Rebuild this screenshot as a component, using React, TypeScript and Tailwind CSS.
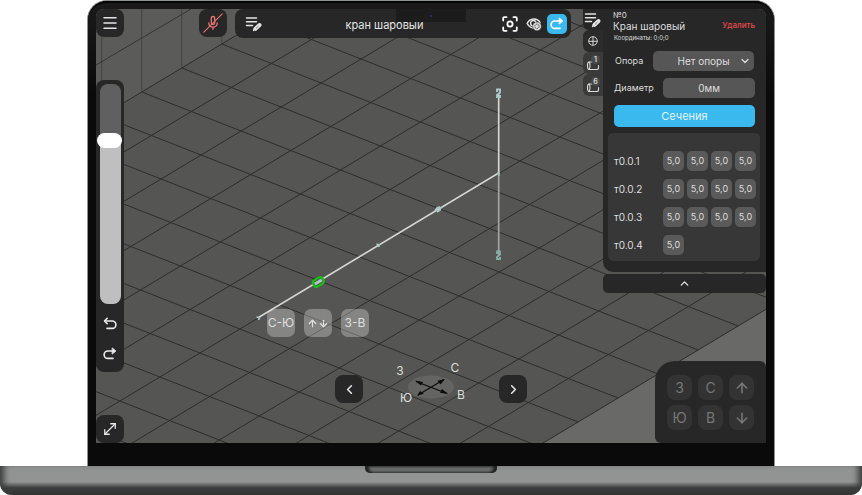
import { useState } from "react";
import type { ReactNode } from "react";
import { ArrowDown, ArrowUp, ChevronDown, ChevronLeft, ChevronRight, ChevronUp, Menu, MoveDiagonal } from "lucide-react";

/* Isometric floor: origin and the two step vectors of one tile */
const ORIGIN = [45.7, 83];
const U = [40, -24];
const V = [49.7, 19.5];
const TILES = 12;

function node(i: number, j: number) {
  return [ORIGIN[0] + i * U[0] + j * V[0], ORIGIN[1] + i * U[1] + j * V[1]];
}

function segment(a: number[], b: number[]) {
  return `M${a[0].toFixed(1)} ${a[1].toFixed(1)}L${b[0].toFixed(1)} ${b[1].toFixed(1)}`;
}

const rising = Array.from({ length: TILES + 1 }, (_, j) => segment(node(-24, j), node(24, j))).join("");
const falling = Array.from({ length: 30 }, (_, k) => segment(node(k - 18, 0), node(k - 18, TILES))).join("");
const floor = [node(-24, 0), node(24, 0), node(24, TILES), node(-24, TILES)].map((p) => p.join(",")).join(" ");
const wall = [-1, 0, 1, 2, 3].map((i) => segment(node(i, 0), [node(i, 0)[0], 0])).join("");

function Scene() {
  return (
    <svg className="absolute inset-0 h-full w-full" viewBox="0 0 670 434" preserveAspectRatio="xMidYMid slice" aria-hidden="true">
      <rect width="670" height="434" fill="#5b5b59" />
      <path d={`M${node(-24, 12).join(" ")}L${node(24, 12).join(" ")}V900H-900Z`} fill="#696967" />
      <polygon points={floor} fill="#555553" />
      <path d={rising + falling} stroke="#2d2d2c" strokeWidth="1" fill="none" />
      <path d={wall} stroke="#444443" strokeWidth="1" fill="none" />
      <path d="M0 56L95 0" stroke="#353534" strokeWidth="1" />
      <path d="M402.700 164V246" stroke="#a3a5a4" strokeWidth="1.700" />
      <path d="M162.500 308.500L402.700 164V84" stroke="#d4d5d4" strokeWidth="1.700" fill="none" />
      <g stroke="#a9c9c8" strokeWidth="1.900" fill="none">
        <path d="M401 83v-2.500h3v3l-3 2.500v2h3v-2" />
        <path d="M401 245v-2.500h3v3l-3 2.500v2h3v-2" stroke="#86aaa6" />
        <path d="M401 165l2-2v4" strokeWidth="1.200" />
        <path d="M339 202l2-3 3-1 M341 203l3-2 1-3" />
        <path d="M280.500 235l3 1-1 2" strokeWidth="1.500" />
        <path d="M160.500 308l3 1-1 2" strokeWidth="1.500" />
      </g>
      <g transform="translate(222.300 273) rotate(-30)">
        <rect x="-5.500" y="-3.500" width="11" height="7" rx="3" fill="#4b634d" stroke="#10c510" strokeWidth="2" />
        <path d="M-4 0H4" stroke="#b9bfc9" strokeWidth="3" />
      </g>
    </svg>
  );
}

function UndoIcon({ flip = false, className = "h-4 w-4" }: { flip?: boolean; className?: string }) {
  return (
    <svg viewBox="0 0 16 16" className={className} fill="none" stroke="currentColor" strokeWidth="1.600" strokeLinecap="round" strokeLinejoin="round" aria-hidden="true">
      {flip ? (
        <>
          <path d="M12 5H5.800a3.700 3.700 0 0 0 0 7.400H11" />
          <path d="M10.500 2.200L13.800 5L10.500 7.800Z" fill="currentColor" strokeWidth="1" />
        </>
      ) : (
        <>
          <path d="M3 5H10.200a3.700 3.700 0 0 1 0 7.400H5" />
          <path d="M5.200 2.300L2.500 5L5.200 7.700" />
        </>
      )}
    </svg>
  );
}

function ListEditIcon() {
  return (
    <svg viewBox="0 0 18 16" className="h-4 w-[18px]" fill="none" stroke="currentColor" strokeLinecap="round" aria-hidden="true">
      <path d="M1.500 2H11.500M1.500 5.700H11.500M1.500 9.500H7.500" strokeWidth="1.500" />
      <path d="M10.500 12.800L14.500 9" strokeWidth="4" />
      <path d="M8.500 14.500l1-2" strokeWidth="1.400" />
      <path d="M11.200 12.200l2-1.900" stroke="#555" strokeWidth="0.700" />
    </svg>
  );
}

function MicOffIcon() {
  return (
    <svg viewBox="0 0 20 20" className="h-5 w-5" fill="none" stroke="#e27172" strokeWidth="1.400" strokeLinecap="round" aria-hidden="true">
      <rect x="8.300" y="3.500" width="3.400" height="8" rx="1.700" />
      <path d="M5.800 10a4.200 4.200 0 0 0 8.400 0M10 14.300v2" />
      <path d="M.8 19.200L19.200.8" strokeWidth="1.200" />
    </svg>
  );
}

function FocusIcon() {
  return (
    <svg viewBox="0 0 16 16" className="h-4 w-4" fill="none" stroke="currentColor" strokeWidth="1.800" strokeLinecap="round" strokeLinejoin="round" aria-hidden="true">
      <path d="M1.200 4.500V2.200a1 1 0 0 1 1-1H4.500M11.500 1.200h2.300a1 1 0 0 1 1 1V4.500M14.800 11.500v2.300a1 1 0 0 1-1 1H11.500M4.500 14.800H2.200a1 1 0 0 1-1-1V11.500" />
      <circle cx="8" cy="8" r="2.600" />
    </svg>
  );
}

function EyeGearIcon() {
  return (
    <svg viewBox="0 0 16 14" className="h-[14px] w-4" fill="none" stroke="currentColor" aria-hidden="true">
      <path d="M1.200 6.500C4 .8 11 .8 14 5.500M1.200 6.500C2.500 9 4.500 10.600 7 11" strokeWidth="1.500" strokeLinecap="round" />
      <circle cx="7.300" cy="6.200" r="2.700" strokeWidth="1.400" />
      <circle cx="11" cy="9.300" r="4.400" fill="#dcdcdc" stroke="#272727" strokeWidth="0.500" />
      <circle cx="11" cy="9.300" r="2.200" stroke="#272727" strokeWidth="0.800" strokeDasharray="1.500 .6" />
    </svg>
  );
}

function GlobeIcon() {
  return (
    <svg viewBox="0 0 10 10" className="h-[10px] w-[10px]" fill="none" stroke="currentColor" strokeWidth="0.900" aria-hidden="true">
      <circle cx="5" cy="5" r="4.300" />
      <path d="M.7 5.300H9.300M5 .7V9.300" />
    </svg>
  );
}

function PipeIcon() {
  return (
    <svg viewBox="0 0 14 12" className="h-3 w-[14px]" fill="none" stroke="currentColor" strokeWidth="1.100" strokeLinecap="round" aria-hidden="true">
      <path d="M7 3H3C1 3 1 10.500 3 10.500H11c1.500 0 1.700-2 1.500-4" />
      <path d="M3 3c1.300 1 1.300 6.500 0 7.500" />
    </svg>
  );
}

function CompassRose() {
  return (
    <svg viewBox="0 -3 80 60" className="h-[60px] w-20" role="img" aria-label="Стороны света">
      <ellipse cx="40" cy="25" rx="23" ry="11.500" fill="#646463" />
      <path d="M25 19.500L56 31.500M27 33L53 17.500" stroke="#0c0c0c" strokeWidth="1.200" />
      <path d="M24 18.500l8 1.500-2 3.500zM57 32l-8-1.300 2-3.600zM26 34l3-5 4 2.500zM54 17l-7.500 1.700 3 3.800z" fill="#0c0c0c" />
      <g fill="#dededd" fontSize="12" textAnchor="middle">
        <text x="9" y="13">З</text>
        <text x="64" y="10">С</text>
        <text x="15" y="40">Ю</text>
        <text x="70" y="37">В</text>
      </g>
    </svg>
  );
}

function SquareButton({ label, children }: { label: string; children: ReactNode }) {
  return (
    <button type="button" aria-label={label} className="flex h-7 w-7 items-center justify-center rounded-lg bg-[#272727] text-[#e6e6e6]">
      {children}
    </button>
  );
}

function SideRail() {
  const [zoom, setZoom] = useState(76);
  const edge = 100 - zoom;
  return (
    <div className="relative flex w-7 shrink-0 flex-col">
      <SquareButton label="Меню">
        <Menu size={18} strokeWidth={2} />
      </SquareButton>
      <div className="mt-[43px] flex flex-col items-center rounded-lg bg-[#272727] pt-1 pb-[11px]">
        <input
          type="range"
          aria-label="Масштаб"
          min={0}
          max={100}
          value={zoom}
          onChange={(e) => setZoom(Number(e.target.value))}
          className="m-0 h-[220px] w-[21px] appearance-none rounded-lg [direction:rtl] [writing-mode:vertical-lr] [&::-webkit-slider-thumb]:-ml-[2px] [&::-webkit-slider-thumb]:h-[15px] [&::-webkit-slider-thumb]:w-[25px] [&::-webkit-slider-thumb]:appearance-none [&::-webkit-slider-thumb]:rounded-full [&::-webkit-slider-thumb]:bg-white"
          style={{ backgroundImage: `linear-gradient(to bottom, #606060 ${edge}%, #bfbfbf ${edge}%)` }}
        />
        <button type="button" aria-label="Отменить" className="mt-3 flex h-[15px] w-7 items-center justify-center text-[#ececec]">
          <UndoIcon />
        </button>
        <button type="button" aria-label="Повторить" className="mt-[15px] flex h-[15px] w-7 items-center justify-center text-[#ececec]">
          <UndoIcon flip />
        </button>
      </div>
      <div className="mt-auto">
        <SquareButton label="Во весь экран">
          <MoveDiagonal size={18} strokeWidth={1.7} />
        </SquareButton>
      </div>
    </div>
  );
}

function Toolbar() {
  return (
    <header className="relative flex min-w-0 flex-1 items-start gap-2 pr-3 pl-[75px]">
      <SquareButton label="Микрофон выключен">
        <MicOffIcon />
      </SquareButton>
      <div className="flex h-[29px] flex-1 items-center rounded-lg bg-[#272727] pr-1 pl-[10px] text-[#e4e4e4]">
        <button type="button" aria-label="Редактировать список">
          <ListEditIcon />
        </button>
        <h1 className="flex-1 pt-[3px] pl-1 text-center text-[11px] leading-4">кран шаровый</h1>
        <button type="button" aria-label="Центрировать" className="text-white">
          <FocusIcon />
        </button>
        <button type="button" aria-label="Видимость" className="ml-2">
          <EyeGearIcon />
        </button>
        <button type="button" aria-label="Поделиться" className="ml-[5px] flex h-5 w-5 items-center justify-center rounded-[5px] bg-[#3ab9ef] text-white">
          <UndoIcon flip />
        </button>
      </div>
    </header>
  );
}

function PipeTab({ count }: { count: number }) {
  return (
    <button type="button" aria-label={`Трубы: ${count}`} className="relative flex h-[22px] w-5 items-center justify-center rounded-l-md bg-[#3a3a3a] pt-1 text-[#dcdcdc]">
      <PipeIcon />
      <span className="absolute top-[3px] right-[3px] flex h-[9px] w-[9px] items-center justify-center rounded-full bg-[#4a4a4a] text-[7px] leading-none font-semibold">{count}</span>
    </button>
  );
}

const sections = [
  { name: "т0.0.1", values: ["5,0", "5,0", "5,0", "5,0"] },
  { name: "т0.0.2", values: ["5,0", "5,0", "5,0", "5,0"] },
  { name: "т0.0.3", values: ["5,0", "5,0", "5,0", "5,0"] },
  { name: "т0.0.4", values: ["5,0"] },
];

function Inspector() {
  return (
    <div className="flex items-start">
      <nav className="flex flex-col">
        <button type="button" aria-label="Свойства" className="flex h-[21px] w-5 items-center justify-center rounded-bl-md bg-[#272727] text-[#e4e4e4]">
          <ListEditIcon />
        </button>
        <button type="button" aria-label="Сеть" className="flex h-[22px] w-5 items-center justify-center rounded-l-md bg-[#2b2b2b] text-[#e4e4e4]">
          <GlobeIcon />
        </button>
        <PipeTab count={1} />
        <PipeTab count={6} />
      </nav>
      <div className="flex w-[163px] flex-col gap-[2px]">
        <section className="rounded-bl-[10px] bg-[#272727] pt-[1px] pb-[11px] text-[#dedede]">
          <div className="flex items-center justify-between pr-[11px] pl-[10px]">
            <div>
              <p className="text-[8px] leading-[10px]">№0</p>
              <h2 className="text-[10px] leading-3">Кран шаровый</h2>
            </div>
            <button type="button" className="pt-2 text-[8px] leading-[10px] font-medium text-[#e64a4a]">
              Удалить
            </button>
          </div>
          <p className="pl-[11px] text-[6px] leading-3">Координаты: 0;0;0</p>
          <div className="mt-[7px] flex items-center justify-between pr-3 pl-3">
            <label htmlFor="support" className="text-[9px] leading-3">
              Опора
            </label>
            <span className="relative flex">
              <select id="support" className="h-5 w-[101px] appearance-none rounded-[5px] bg-[#565656] text-center text-[10px] leading-5 text-[#dedede] [text-align-last:center]">
                <option>Нет опоры</option>
              </select>
              <ChevronDown size={12} strokeWidth={2.5} className="pointer-events-none absolute top-1 right-[3px]" />
            </span>
          </div>
          <div className="mt-[7px] flex items-center justify-between pr-[11px] pl-[11px]">
            <label htmlFor="diameter" className="text-[9px] leading-3">
              Диаметр
            </label>
            <input id="diameter" defaultValue="0мм" className="h-5 w-[92px] rounded-[5px] bg-[#565656] text-center text-[10px] leading-5" />
          </div>
          <div className="pt-[7px] pr-[11px] pl-[11px]">
            <button type="button" className="block h-[22px] w-full rounded-[5px] bg-[#3ab9ef] text-center text-[11px] leading-[22px] text-[#e4f4fc]">
              Сечения
            </button>
          </div>
          <ul className="mt-[6px] mr-[6px] ml-[5px] flex flex-col gap-2 rounded-[5px] bg-[#373737] pt-[18px] pr-1 pb-[6px] pl-[6px]">
            {sections.map((row) => (
              <li key={row.name} className="flex items-center">
                <span className="w-[49px] text-[10px] leading-5">{row.name}</span>
                <span className="flex gap-[3px]">
                  {row.values.map((value, i) => (
                    <input key={i} aria-label={`${row.name}, сечение ${i + 1}`} defaultValue={value} className="h-5 w-[21px] rounded-[5px] bg-[#5a5a5a] text-center text-[9px] leading-5" />
                  ))}
                </span>
              </li>
            ))}
          </ul>
        </section>
        <button type="button" aria-label="Свернуть панель" className="flex h-[19px] items-center justify-center rounded-[5px] bg-[#272727] text-[#e4e4e4]">
          <ChevronUp size={13} strokeWidth={2.5} />
        </button>
      </div>
    </div>
  );
}

function KeyButton({ label, children }: { label: string; children: ReactNode }) {
  return (
    <button type="button" aria-label={label} className="flex h-[25px] items-center justify-center rounded-lg bg-[#333] text-sm leading-none text-[#777]">
      {children}
    </button>
  );
}

function Keypad() {
  return (
    <div className="grid h-[82px] w-[111px] grid-cols-3 content-start gap-x-[6px] gap-y-[5px] self-end rounded-tl-[20px] rounded-tr-md rounded-bl-md bg-[#272727] pt-[14px] pr-3 pl-3">
      <KeyButton label="З">З</KeyButton>
      <KeyButton label="С">С</KeyButton>
      <KeyButton label="Вверх">
        <ArrowUp size={16} strokeWidth={2.4} />
      </KeyButton>
      <KeyButton label="Ю">Ю</KeyButton>
      <KeyButton label="В">В</KeyButton>
      <KeyButton label="Вниз">
        <ArrowDown size={16} strokeWidth={2.4} />
      </KeyButton>
    </div>
  );
}

/* Axis choices that hang beside the selected fitting on the canvas */
function AxisPicker() {
  const style = "flex h-7 w-7 items-center justify-center rounded-[7px] bg-white/28 text-xs leading-none text-[#dedede]";
  return (
    <div className="absolute top-[300px] left-[171px] flex gap-[9px]">
      <button type="button" className={style}>
        С-Ю
      </button>
      <button type="button" aria-label="Вверх-вниз" className={style}>
        <ArrowUp size={11} strokeWidth={2.6} />
        <ArrowDown size={11} strokeWidth={2.6} />
      </button>
      <button type="button" className={style}>
        З-В
      </button>
    </div>
  );
}

export default function App() {
  return (
    <main className="w-full bg-white font-['Inter','Liberation_Sans',sans-serif]">
      <div className="mx-[87px] rounded-t-[20px] border-x border-t border-[#8c918f] bg-[#0c0c0c]">
        <div className="rounded-t-[19px] border-t-2 border-[#050505] bg-linear-to-b from-[#191a19] from-0% to-[#0a0a0a] to-20% px-2 pt-[6px] pb-[23px]">
          <div className="relative flex min-h-[434px] overflow-hidden rounded-t-lg">
            <Scene />
            <AxisPicker />
            <SideRail />
            <Toolbar />
            <aside className="relative flex shrink-0 flex-col justify-between">
              <Inspector />
              <Keypad />
            </aside>
            <div className="absolute top-0 left-1/2 flex h-[13px] w-[70px] -translate-x-1/2 items-center justify-center bg-[#1c1c1c]">
              <span className="h-[2px] w-[2px] rounded-full bg-[#263b6b]" />
            </div>
            <div className="absolute bottom-6 left-1/2 flex -translate-x-1/2 items-center gap-7">
              <SquareButton label="Назад">
                <ChevronLeft size={15} strokeWidth={2.5} />
              </SquareButton>
              <CompassRose />
              <SquareButton label="Вперёд">
                <ChevronRight size={15} strokeWidth={2.5} />
              </SquareButton>
            </div>
          </div>
        </div>
      </div>
      <div className="flex h-[29px] justify-center rounded-b-xl bg-linear-to-b from-[#929493] from-55% via-[#3d3f3e] via-75% to-[#333534] shadow-[inset_8px_0_6px_-4px_#3b3d3c,inset_-8px_0_6px_-4px_#3b3d3c]">
        <div className="h-[7px] w-[132px] rounded-b-[5px] bg-[#6b6d6c] shadow-[inset_4px_0_3px_#222,inset_-4px_0_3px_#222]" />
      </div>
    </main>
  );
}
